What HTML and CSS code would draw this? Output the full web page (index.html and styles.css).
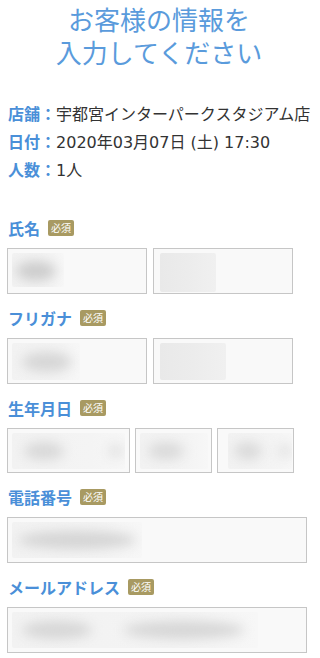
FILE: index.html
```html
<!DOCTYPE html>
<html lang="ja">
<head>
<meta charset="utf-8">
<link rel="stylesheet" href="styles.css">
</head>
<body>
<div class="page">
  <h1 class="title">お客様の情報を<br>入力してください</h1>

  <dl class="info">
    <div class="info-row"><dt>店舗：</dt><dd class="store">宇都宮インターパークスタジアム店</dd></div>
    <div class="info-row"><dt>日付：</dt><dd>2020年03月07日 (土) 17:30</dd></div>
    <div class="info-row"><dt>人数：</dt><dd>1人</dd></div>
  </dl>

  <div class="field">
    <div class="label"><span>氏名</span><span class="badge">必須</span></div>
    <div class="inputs">
      <div class="box w140"><div class="ghost g1"><span class="blob b1"></span></div></div>
      <div class="box w140"><div class="ghost g2 flat"></div></div>
    </div>
  </div>

  <div class="field">
    <div class="label"><span>フリガナ</span><span class="badge">必須</span></div>
    <div class="inputs">
      <div class="box w140"><div class="ghost g3"><span class="blob b3"></span></div></div>
      <div class="box w140"><div class="ghost g4 flat"></div></div>
    </div>
  </div>

  <div class="field">
    <div class="label"><span>生年月日</span><span class="badge">必須</span></div>
    <div class="inputs">
      <div class="box bd w123"><div class="ghost g5"><span class="blob b5"></span><span class="blob b5b"></span></div></div>
      <div class="box bd w77"><div class="ghost g6"><span class="blob b6"></span></div></div>
      <div class="box bd w77"><div class="ghost g7"><span class="blob b7"></span><span class="blob b7b"></span></div></div>
    </div>
  </div>

  <div class="field">
    <div class="label"><span>電話番号</span><span class="badge">必須</span></div>
    <div class="inputs">
      <div class="box full"><div class="ghost g8"><span class="blob b8"></span></div></div>
    </div>
  </div>

  <div class="field">
    <div class="label"><span>メールアドレス</span><span class="badge">必須</span></div>
    <div class="inputs">
      <div class="box full"><div class="ghost g9"><span class="blob b9"></span><span class="blob b9b"></span></div></div>
    </div>
  </div>
</div>
</body>
</html>
```

FILE: styles.css
```css
* { box-sizing: border-box; }
html, body { margin: 0; padding: 0; background: #fff; }
body {
  font-family: "DejaVu Sans", "Noto Sans CJK JP", sans-serif;
  color: #333;
  width: 320px;
  overflow: hidden;
}
.page { padding: 2px 13px 0 7px; }
.title {
  margin: 0;
  text-align: center;
  font-family: "Noto Sans CJK JP", sans-serif;
  font-size: 26px;
  line-height: 33px;
  font-weight: normal;
  color: #5a9bdc;
  padding-left: 4px;
}
.info { margin: 31px 0 0 1px; }
.info-row {
  display: flex;
  height: 28px;
  align-items: center;
  font-size: 16px;
  white-space: nowrap;
}
.info dt {
  flex-shrink: 0;
  font-family: "Noto Sans CJK JP", sans-serif;
  font-weight: bold;
  color: #4a8fd8;
  margin: 0;
}
.info dd { margin: 0; color: #333; white-space: nowrap; }
.info dd.store { font-family: "Noto Sans CJK JP", sans-serif; }

.field { margin-top: 12px; }
.info + .field { margin-top: 33px; }
.label {
  display: flex;
  align-items: center;
  height: 24px;
  margin-left: 1px;
  font-family: "Noto Sans CJK JP", sans-serif;
  font-size: 16px;
  font-weight: bold;
  color: #4a8fd8;
}
.badge {
  margin-left: 8px;
  width: 26px;
  height: 16px;
  border-radius: 2px;
  background: #a89a62;
  color: #fff;
  font-size: 10px;
  font-weight: normal;
  line-height: 16px;
  text-align: center;
}
.inputs { display: flex; gap: 6px; margin-top: 8px; }
.inputs .w77 + .w77, .inputs .w123 + .w77 { margin-left: -1px; }
.box {
  height: 46px;
  border: 1px solid #c6c6c6;
  background: #f9f9f9;
  padding: 4px;
  overflow: hidden;
}
.box.bd { height: 45px; }
.w140 { width: 140px; }
.w123 { width: 123px; }
.w77 { width: 77px; }
.full { width: 300px; }

.ghost {
  height: 100%;
  position: relative;
  background: linear-gradient(90deg, #f2f2f2 0%, #f4f4f4 70%, #f7f7f7 100%);
  overflow: hidden;
  border-radius: 2px;
}
.ghost.flat { background: linear-gradient(90deg, #e9e9e9 0%, #ececec 50%, #f0f0f0 100%); }
.blob {
  position: absolute;
  display: block;
  background: #d2d2d2;
  border-radius: 50%;
  filter: blur(6px);
}
.g1 { width: 52px; height: 34px; }
.b1 { left: 4px; top: 8px; width: 40px; height: 20px; background: #cdcdcd; }
.g2 { width: 56px; height: 39px; margin-left: 2px; }
.g3 { width: 68px; height: 37px; }
.b3 { left: 10px; top: 9px; width: 50px; height: 20px; background: #d6d6d6; }
.g4 { width: 66px; height: 37px; margin-left: 2px; background: linear-gradient(90deg, #ececec, #f3f3f3); }
.g5 { width: 113px; height: 36px; }
.b5 { left: 12px; top: 9px; width: 40px; height: 18px; background: #d8d8d8; }
.b5b { left: 96px; top: 11px; width: 16px; height: 14px; background: #e2e2e2; }
.g6 { width: 68px; height: 36px; margin-left: 0; }
.b6 { left: 8px; top: 9px; width: 36px; height: 18px; background: #dadada; }
.g7 { width: 64px; height: 36px; margin-left: 6px; }
.b7 { left: 6px; top: 9px; width: 28px; height: 18px; background: #dadada; }
.b7b { left: 50px; top: 11px; width: 14px; height: 14px; background: #e2e2e2; }
.g8 { width: 130px; height: 36px; }
.b8 { left: 6px; top: 9px; width: 118px; height: 18px; background: #d4d4d4; }
.g9 { width: 246px; height: 36px; }
.b9 { left: 10px; top: 9px; width: 70px; height: 18px; background: #d6d6d6; }
.b9b { left: 112px; top: 9px; width: 120px; height: 18px; background: #d6d6d6; }
```
